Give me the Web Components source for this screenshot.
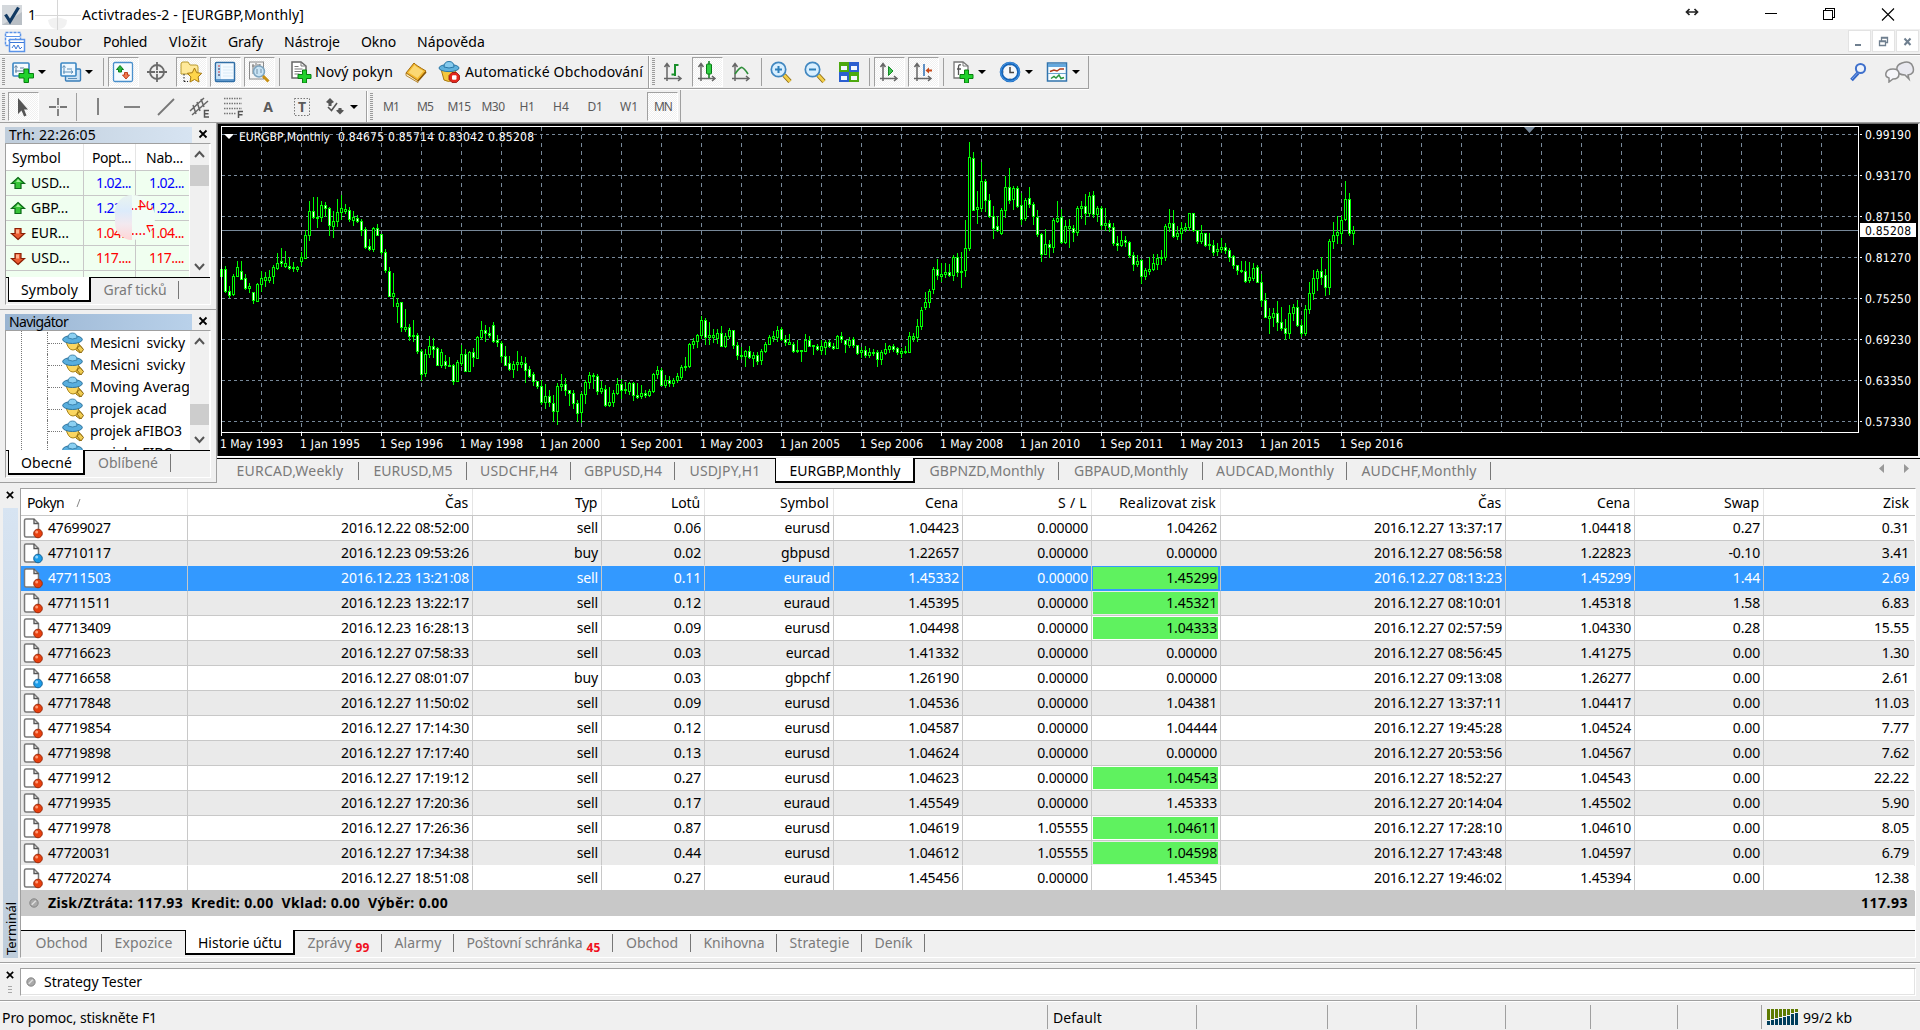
<!DOCTYPE html>
<html lang="cs">
<head>
<meta charset="utf-8">
<title>Activtrades-2 - [EURGBP,Monthly]</title>
<style>
	html, body {
		margin: 0;
		height: 100%;
		overflow: hidden;
		background: #f0f0f0;
	}
	body {
		font: 14px/20px "Noto Sans", "Liberation Sans", sans-serif;
		color: #000;
	}
</style>
</head>
<body>
<trade-app></trade-app>

<script>
// 22x22 icons
const ICONS = {
	check: `<rect x="1" y="1" width="20" height="20" fill="#d4d8dc"/><path d="M1 21 L21 21 L21 8Z" fill="#b9bfc5"/><path d="M4.500 10.500 L9 17.500 L17.500 3.500" fill="none" stroke="#123a63" stroke-width="3.200"/>`,
	app: `<rect x="1.500" y="1.500" width="15" height="13" fill="#fff" stroke="#5b93e8" stroke-width="1.500" stroke-dasharray="3 1"/><path d="M2 5.500h14M4 10l3-2 3 3 2-4" stroke="#5b93e8" fill="none"/><rect x="5.500" y="8.500" width="15" height="12" fill="#fff" stroke="#5b93e8" stroke-width="1.500"/><path d="M6 11.500h14M8 17l2-3 2 4 2-4 2 4 2-2" stroke="#3d78d8" fill="none"/>`,
	newchart: `<rect x="1" y="2" width="16" height="13" rx="1" fill="#f4faff" stroke="#3a86c4" stroke-width="1.600"/><path d="M4 5v7M2.500 6.500L4 4.500 5.500 6.500M3 10h10M11 8.500l2 1.500-2 1.500M8 7h4" stroke="#5d7f9c" fill="none"/><path d="M12 8h4.500v4.500h5v4.500h-5v4.500H12v-4.500H7v-4.500h5z" fill="#21d12c" stroke="#087f10"/>`,
	profiles: `<rect x="5.500" y="8" width="15" height="12" rx="1" fill="#cfe4f5" stroke="#3a7db8" stroke-width="1.400"/><rect x="1" y="2" width="15" height="13" rx="1" fill="#eef7fe" stroke="#3a86c4" stroke-width="1.600"/><path d="M4 5v8M2.500 6.500L4 4.500 5.500 6.500M3 11h10M11 9.500l2 1.500-2 1.500M7 8h5M8 17.500h9" stroke="#5d8fb8" fill="none"/>`,
	market: `<rect x="1.500" y="1.500" width="19" height="19" rx="1.500" fill="#f6fbff" stroke="#4a90cc" stroke-width="1.300"/><path d="M8 4.500l3.500 4h-2v2.500h-3V8.500h-2z" fill="#27b53a" stroke="#0b7e1c"/><path d="M14 18l-3.500-4h2v-2.500h3V14h2z" fill="#f07a50" stroke="#c2401c"/>`,
	target: `<circle cx="11" cy="11" r="7" fill="none" stroke="#6b6b6b" stroke-width="1.800"/><path d="M11 1v8M11 13v8M1 11h8M13 11h8" stroke="#6b6b6b" stroke-width="1.800"/><circle cx="11" cy="11" r="1.200" fill="#6b6b6b"/>`,
	favorites: `<path d="M1 3q0-2 2-2h5l2 3h6q2 0 2 2v7H1z" fill="#ffe99a" stroke="#b99a2e"/><path d="M4 13v8M4 20.500h4" stroke="#222" stroke-dasharray="1.500 1.500"/><path d="M14.500 7l2.200 4.700 5 .6-3.600 3.600.9 5.100-4.500-2.500-4.500 2.500.9-5.100-3.600-3.600 5-.6z" fill="#ffd64a" stroke="#a87a10"/>`,
	navigator: `<rect x="1.500" y="1.500" width="19" height="19" rx="1" fill="#f3faff" stroke="#2f6ea6" stroke-width="1.500"/><rect x="3" y="3" width="4" height="16" fill="#c5e1f6"/><path d="M4 5h2M4 11h2" stroke="#d33"/><path d="M4 8h2M4 14h2" stroke="#225"/><path d="M9 6h10M9 9h10M9 12h10M9 15h10" stroke="#d9ebf7"/><path d="M2 19h18" stroke="#3a7fbe" stroke-width="1.500"/>`,
	tester: `<rect x="1.500" y="1" width="14" height="17" fill="#f5f5f5" stroke="#8a8a8a"/><path d="M5 3v10M8 2v6M12 3v5M4 5h3M9 4h3" stroke="#777"/><circle cx="11" cy="10.500" r="5.500" fill="#c4e2f5" fill-opacity=".9" stroke="#7da4bf" stroke-width="1.500"/><path d="M9 8v5M13 8v4" stroke="#7592a8"/><path d="M15 15l5.500 5.500" stroke="#c99113" stroke-width="3"/>`,
	order: `<path d="M2 1h9l5 4v12H2z" fill="#fff" stroke="#666" stroke-width="1.500"/><path d="M11 1v4h5M4.500 5.500h4M4.500 8h8M4.500 10.500h7M4.500 13h5" stroke="#777" fill="none"/><path d="M12.500 9h4v4.500H21v4h-4.500V22h-4v-4.500H8v-4h4.500z" fill="#21d12c" stroke="#087f10"/>`,
	book: `<path d="M1 12L9 2q1.500 2 12 8l-8 10z" fill="#f2b72d" stroke="#a56c0b"/><path d="M3.500 11.500L9.500 4q2 2 9 6l-6 7z" fill="#fbd873"/><path d="M1 12l12 8v1.500L1 14.500z" fill="#fff3c8" stroke="#a56c0b" stroke-width=".8"/><path d="M13 20l8-9" stroke="#8a5806" stroke-width="1.500"/>`,
	expert: `<path d="M3 8l3 11q5 3 9 0l3-11z" fill="#f5c73c" stroke="#a97a11"/><ellipse cx="11" cy="7" rx="10" ry="3.600" fill="#5fb1dc" stroke="#2876a6"/><path d="M6 6q0-5.500 5-5.500t5 5.500q-5 2-10 0" fill="#86cbee" stroke="#2876a6"/><path d="M14 11.500h4.500l3 3v4l-3 3H14l-3-3v-4z" fill="#e3271c" stroke="#8e0d07" stroke-width=".8"/><rect x="14" y="14.300" width="4.500" height="4.500" rx="1" fill="#fff"/>`,
	bars: `<path d="M5 3v17M2.500 6L5 2.500 7.500 6M2 17.500h17M16 15l3 2.500-3 2.500" fill="none" stroke="#666" stroke-width="1.500"/><path d="M13 3v12M13 4h3.500M9.500 13.500H13" stroke="#198f2a" stroke-width="2"/>`,
	candles: `<path d="M5 3v17M2.500 6L5 2.500 7.500 6M2 17.500h17M16 15l3 2.500-3 2.500" fill="none" stroke="#666" stroke-width="1.500"/><path d="M13 0v17" stroke="#087a17" stroke-width="1.500"/><rect x="10.500" y="3" width="5" height="10" rx="1" fill="#30cf42" stroke="#087a17"/>`,
	line: `<path d="M5 3v17M2.500 6L5 2.500 7.500 6M2 17.500h17M16 15l3 2.500-3 2.500" fill="none" stroke="#666" stroke-width="1.500"/><path d="M5 13q5-7 7-6.500t6 6.500" fill="none" stroke="#308f3b" stroke-width="1.700"/>`,
	zoomin: `<path d="M14 14l6 6.500" stroke="#8c6a10" stroke-width="4.500"/><path d="M14 14l6 6.500" stroke="#f3cf4a" stroke-width="2.800"/><circle cx="8.500" cy="8.500" r="7.200" fill="#d8efff" stroke="#4187c0" stroke-width="1.700"/><path d="M8.500 5v7M5 8.500h7" stroke="#2f7fb9" stroke-width="2"/>`,
	zoomout: `<path d="M14 14l6 6.500" stroke="#8c6a10" stroke-width="4.500"/><path d="M14 14l6 6.500" stroke="#f3cf4a" stroke-width="2.800"/><circle cx="8.500" cy="8.500" r="7.200" fill="#d8efff" stroke="#4187c0" stroke-width="1.700"/><path d="M5 8.500h7" stroke="#2f7fb9" stroke-width="2"/>`,
	tiles: `<rect x="1" y="1" width="10" height="10" fill="#4da80f"/><rect x="11" y="1" width="10" height="10" fill="#2c5fd0"/><rect x="1" y="11" width="10" height="10" fill="#2c5fd0"/><rect x="11" y="11" width="10" height="10" fill="#4da80f"/><g fill="#f2f8ff"><rect x="3" y="5" width="6" height="4"/><rect x="13" y="5" width="6" height="4"/><rect x="3" y="15" width="6" height="4"/><rect x="13" y="15" width="6" height="4"/></g>`,
	autoscroll: `<path d="M5 3v17M2.500 6L5 2.500 7.500 6M2 17.500h17M16 15l3 2.500-3 2.500" fill="none" stroke="#666" stroke-width="1.500"/><path d="M10.500 5.500v9l4.500-4.500z" fill="#43c454" stroke="#148a24"/>`,
	shift: `<path d="M5 3v17M2.500 6L5 2.500 7.500 6M2 17.500h17M16 15l3 2.500-3 2.500" fill="none" stroke="#666" stroke-width="1.500"/><path d="M12 3v12" stroke="#2b6eb4" stroke-width="1.500"/><path d="M13.500 9.500L17 6.500v2h3v2h-3v2z" fill="#c84a1a"/>`,
	indicator: `<path d="M2 1h9l5 4v12H2z" fill="#fff" stroke="#777" stroke-width="1.300"/><path d="M11 1v4h5" fill="none" stroke="#777"/><path d="M9 4q-2.500-1-2.500 2v8M5 8h4" fill="none" stroke="#555" stroke-width="1.300"/><path d="M12.500 9h4v4.500H21v4h-4.500V22h-4v-4.500H8v-4h4.500z" fill="#21d12c" stroke="#087f10"/>`,
	clock: `<circle cx="11" cy="11" r="8.700" fill="#f4f7fa" stroke="#1363b8" stroke-width="3.200"/><circle cx="11" cy="11" r="9.300" fill="none" stroke="#4c9cea"/><path d="M11 6v5.500h4" fill="none" stroke="#444" stroke-width="1.500"/><path d="M11 3.800v1.200M11 17v1.200M3.800 11h1.200" stroke="#888"/>`,
	template: `<rect x="1.500" y="2" width="19" height="18" fill="#f7fcff" stroke="#3274ad" stroke-width="1.500"/><rect x="2" y="3" width="18" height="3" fill="#64a8de"/><path d="M2 12.500h18" stroke="#6ba5cf"/><path d="M4 10.500l4-1.500 3 1 3-2h4" fill="none" stroke="#b13a1a" stroke-width="1.500"/><path d="M5 17.500l3-2 2 1.500 3-3 2 3.500 3-1" fill="none" stroke="#29953a" stroke-width="1.500"/>`,
	cursor: `<path d="M6 2v16l3.500-3.600 2.600 6.200 2.400-1.200-2.400-5.900H16z" fill="#555"/>`,
	cross: `<path d="M11 2v7M11 13v7M2 11h7M13 11h7" stroke="#777" stroke-width="1.800"/><path d="M10 11h2" stroke="#777"/>`,
	vline: `<path d="M11 2v17" stroke="#777" stroke-width="1.800"/>`,
	hline: `<path d="M3 11h16" stroke="#777" stroke-width="1.800"/>`,
	trend: `<path d="M3 19L19 3" stroke="#777" stroke-width="1.800"/>`,
	channel: `<path d="M1 15L15 2M3 19L19 5M4 9l3 9M8 6l3 9M12 3l3 8" stroke="#666" stroke-width="1.500"/><path d="M20 14.500h-4.500v6.500H20M15.500 17.700h4" fill="none" stroke="#555" stroke-width="1.500"/>`,
	fibo: `<path d="M1 2.500h18M1 7.500h18M1 12.500h18M1 17.500h12" stroke="#777" stroke-width="1.300" stroke-dasharray="1.500 1"/><path d="M20 15.500h-4.500v6.500M15.500 18.700h4" fill="none" stroke="#555" stroke-width="1.500"/>`,
	label: `<rect x="3.500" y="2.500" width="15" height="17" fill="none" stroke="#777" stroke-dasharray="1.500 1.500"/>`,
	arrows: `<path d="M1 6l4-4 4 4-2.500 1.500V10h-3V7.500zM11 14.500l2.500-1v-1.500h3v1.500l2.500 1-4 4z" fill="#555"/><path d="M3 11l3.500 3.500L12 7" fill="none" stroke="#555" stroke-width="1.600"/>`,
	search: `<path d="M10 12L3.500 19" stroke="#3467c8" stroke-width="3.600"/><path d="M9.500 12L4 18" stroke="#7fa7ea" stroke-width="1"/><circle cx="12.500" cy="7.500" r="4.600" fill="#eef3fb" stroke="#3f70cc" stroke-width="2"/>`,
	gold: `<path d="M12 13l4-2 5 6-3 4-4-3z" fill="#f3c843" stroke="#8e6b12"/><path d="M4 9q2 9 7 9t6-9z" fill="#fad661" stroke="#a98316"/><ellipse cx="10.500" cy="7.500" rx="9.800" ry="4" fill="#58aede" stroke="#2d749e"/><path d="M6 6q0-5 4.500-5T15 6q-4.500 2-9 0" fill="#8bd0f2" stroke="#2d749e" stroke-width=".8"/><path d="M15 16l3-2.500 3.500 4-2.500 3.500z" fill="#f0cc52" stroke="#8e6b12"/>`,
	up: `<path d="M11 5.500l6.500 6h-3.500v5H8v-5H4.500z" fill="#36c437" stroke="#0b6a17" stroke-width="1.200"/><path d="M11 7l3 3H9z" fill="#a4f09a"/>`,
	down: `<path d="M11 17.500l6.500-6h-3.500v-5H8v5H4.500z" fill="#ea5a30" stroke="#8b2006" stroke-width="1.200"/><path d="M9 7.500h3v4H9z" fill="#ffb08d"/>`,
	sell: `<path d="M3 2h8l4.500 4.500V20H3q-1.500 0-1.500-1.500v-15Q1.500 2 3 2z" fill="#fff" stroke="#7a7a7a" stroke-width="1.500"/><path d="M11 2v4.500h4.500" fill="none" stroke="#555" stroke-width="1.300"/><circle cx="15" cy="16.500" r="4.300" fill="#e8400f" stroke="#9c2b0b"/><circle cx="13.700" cy="15" r="1.500" fill="#ff9a74"/>`,
	buy: `<path d="M3 2h8l4.500 4.500V20H3q-1.500 0-1.500-1.500v-15Q1.500 2 3 2z" fill="#fff" stroke="#7a7a7a" stroke-width="1.500"/><path d="M11 2v4.500h4.500" fill="none" stroke="#555" stroke-width="1.300"/><circle cx="15" cy="16.500" r="4.300" fill="#1b9ce8" stroke="#14649b"/><circle cx="13.700" cy="15" r="1.500" fill="#8fd4ff"/>`,
	dot: `<circle cx="11" cy="11" r="4.600" fill="#a9a9a9" stroke="#7e7e7e"/><path d="M8.500 13l4.500-4.500" stroke="#e0e0e0" stroke-width="1.500"/>`,
	close: `<path d="M7.500 7.500l7 7M14.500 7.500l-7 7" stroke="#000" stroke-width="1.800"/>`,
};

// every element keeps its markup in its own open shadow root
class BaseElement extends HTMLElement {
	constructor () {
		super();
		this._root = this.attachShadow({ mode: 'open' });
	}
	connectedCallback () {
		this._root.innerHTML = this.render();
	}
	attr (name, def) {
		return this.hasAttribute(name) ? this.getAttribute(name) : def;
	}
}

class UiIcon extends BaseElement {
	render () {
		const s = this.attr('size', 22);
		return `
		<style>
			:host { display: block; flex: none; width: ${s}px; height: ${s}px; }
			svg { display: block; }
		</style>
		<svg width="${s}" height="${s}" viewBox="0 0 22 22">${ICONS[this.attr('name')]}</svg>`;
	}
}
customElements.define('ui-icon', UiIcon);

// single line of text tracked to an exact width
const ruler = document.createElement('canvas').getContext('2d');
class UiText extends BaseElement {
	render () {
		const text = this.attr('text', '');
		const size = this.attr('size', 14);
		const weight = this.attr('weight', 400);
		const family = this.attr('family', '"Noto Sans"');
		let spacing = 0;
		if (this.hasAttribute('w')) {
			ruler.font = `${weight} ${size}px ${family}`;
			spacing = (this.attr('w') - ruler.measureText(text).width) / text.length;
		}
		return `
		<style>
			:host { display: block; flex: none; }
			span { display: block; white-space: pre; font: ${weight} ${size}px/20px ${family}, sans-serif; letter-spacing: ${spacing.toFixed(3)}px; }
		</style>
		<span>${text}</span>`;
	}
}
customElements.define('ui-text', UiText);

class TitleBar extends BaseElement {
	render () {
		return `
		<style>
			:host { display: flex; position: relative; height: 29px; background: #fff; box-sizing: border-box; padding-left: 1px; align-items: center; }
			.num { width: 54px; padding-left: 5px; }
			.caption { flex: 1; }
			.mark { position: absolute; left: 34px; top: 0; }
			.buttons { display: block; }
		</style>
		<ui-icon name="check"></ui-icon>
		<ui-text class="num" text="1"></ui-text>
		<ui-text class="caption" text="Activtrades-2 - [EURGBP,Monthly]" w="222"></ui-text>
		<svg class="mark" width="48" height="30"><path d="M14 20q9-5 19 0 0 9-9 9t-10-9" fill="#f1f1f1"/><path d="M1 15.500h46M23.500 0v30" stroke="#d6d6d6"/></svg>
		<svg class="buttons" width="240" height="29">
			<path d="M7 12h10M9.500 9l-3 3 3 3M14.500 9l3 3-3 3" fill="none" stroke="#222" stroke-width="1.700"/>
			<g shape-rendering="crispEdges" fill="none" stroke="#000">
				<path d="M85 13.500h12"/>
				<path d="M145.500 10.500v-2h9v9h-2"/>
				<rect x="143.500" y="10.500" width="9" height="9"/>
			</g>
			<path d="M202 8.500l12 12M214 8.500l-12 12" stroke="#000" stroke-width="1.100"/>
		</svg>`;
	}
}
customElements.define('title-bar', TitleBar);

class MenuBar extends BaseElement {
	render () {
		const items = [['Soubor', 48, 69], ['Pohled', 44, 66], ['Vložit', 38, 59], ['Grafy', 35, 56], ['Nástroje', 56, 77], ['Okno', 35, 56], ['Nápověda', 68, 68]];
		return `
		<style>
			:host { display: flex; height: 27px; box-sizing: border-box; border-bottom: 1px solid #fff; box-shadow: inset 0 -1px #a0a0a0; padding-left: 4px; }
			ui-icon { margin: 2px 8px 0 0; }
			ui-text { padding-top: 3px; }
			.mdi { margin-left: auto; display: flex; gap: 1px; padding: 1px 1px 0 0; }
			.mdi svg { background: #fff; border: 1px solid #e3e3e3; }
		</style>
		<ui-icon name="app"></ui-icon>
		${items.map(([t, w, box]) => `<ui-text text="${t}" w="${w}" style="width:${box}px"></ui-text>`).join('')}
		<div class="mdi">
			<svg width="21" height="20" viewBox="0 0 21 20"><path d="M6 14h6" stroke="#6f7f8f" stroke-width="2"/></svg>
			<svg width="21" height="20" viewBox="0 0 21 20"><path d="M8.500 10V6.500h6v5h-2M8 7h7M6.500 10h6v4.500h-6zM6 10.500h7" fill="none" stroke="#6f7f8f" stroke-width="1.300"/></svg>
			<svg width="21" height="20" viewBox="0 0 21 20"><path d="M7.500 7.500l6 6.500M13.500 7.500l-6 6.500" stroke="#6f7f8f" stroke-width="2"/></svg>
		</div>`;
	}
}
customElements.define('menu-bar', MenuBar);

class ToolButton extends BaseElement {
	render () {
		const pressed = this.hasAttribute('pressed');
		const icon = this.attr('icon');
		const label = this.attr('label');
		const drop = this.hasAttribute('drop');
		return `
		<style>
			:host { display: flex; flex: none; box-sizing: border-box; width: ${this.attr('w', 34)}px; padding: 1px 2px 1px 1px; }
			.face { display: flex; flex: 1; align-items: center; box-sizing: border-box; border: 1px solid transparent; padding-left: ${this.attr('pad', 3)}px; }
			.pressed { border-color: #a0a0a0 #fff #fff #a0a0a0; background: repeating-conic-gradient(#fff 0 25%, #f0f0f0 0 50%) 0 0 / 2px 2px; }
			.drop { margin-left: auto; margin-right: ${this.attr('dropgap', 5)}px; border: 4px solid transparent; border-top: 4px solid #000; border-bottom: 0; }
			.label { padding-left: ${this.attr('gap', 3)}px; }
			.glyph { flex: 1; text-align: center; color: #5a5a5a; margin-left: -2px; }
		</style>
		<div class="face ${pressed ? 'pressed' : ''}">
			${icon ? `<ui-icon name="${icon}"></ui-icon>` : ''}
			${label ? `<ui-text class="label" text="${label}" w="${this.attr('labelw')}"></ui-text>` : ''}
			${this.hasAttribute('glyph') ? `<div class="glyph"><slot></slot></div>` : ''}
			${drop ? '<i class="drop"></i>' : ''}
		</div>`;
	}
}
customElements.define('tool-button', ToolButton);

class ToolGrip extends BaseElement {
	render () {
		return `
		<style>
			:host { display: block; flex: none; width: ${this.attr('w', 7)}px; padding-left: 2px; box-sizing: border-box; }
			i { display: block; width: 3px; height: 28px; margin-top: 2px; background: repeating-linear-gradient(#9a9a9a 0 1px, #f0f0f0 1px 2px); }
		</style><i></i>`;
	}
}
customElements.define('tool-grip', ToolGrip);

class ToolSep extends BaseElement {
	render () {
		return `
		<style>
			:host { display: block; flex: none; width: ${this.attr('w', 6)}px; padding: 2px 0 2px ${this.attr('pad', 2)}px; box-sizing: border-box; }
			i { display: block; width: 1px; height: 28px; background: #a0a0a0; }
		</style><i></i>`;
	}
}
customElements.define('tool-sep', ToolSep);

class ToolBars extends BaseElement {
	render () {
		const frames = ['M1', 'M5', 'M15', 'M30', 'H1', 'H4', 'D1', 'W1', 'MN'];
		const widths = [16, 16, 23, 23, 15, 16, 15, 18, 18];
		return `
		<style>
			:host { display: block; height: 66px; position: relative; }
			.row { display: flex; height: 32px; width: max-content; border-bottom: 1px solid #a0a0a0; border-right: 1px solid #a0a0a0; box-shadow: 0 1px #fff; }
			.row + .row { margin-top: 1px; height: 31px; padding-top: 1px; border-bottom: 0; box-shadow: none; }
			.group { display: flex; border-right: 1px solid #a0a0a0; box-shadow: 1px 0 #fff; margin-right: 1px; }
			.last { border: 0; margin: 0; box-shadow: none; }
			b { font: 700 14px/20px "Noto Sans", sans-serif; }
			.text { display: grid; }
			.text > * { grid-area: 1 / 1; place-self: center; }
			.frame { display: flex; justify-content: center; }
			.right { position: absolute; right: 4px; top: 5px; display: flex; gap: 14px; }
		</style>
		<div class="row">
			<div class="group">
				<tool-grip w="8"></tool-grip>
				<tool-button icon="newchart" w="47" pad="2" dropgap="6" drop></tool-button>
				<tool-button icon="profiles" w="48" pad="3" dropgap="7" drop></tool-button>
				<tool-sep w="4" pad="0"></tool-sep>
				<tool-button icon="market" pressed></tool-button>
				<tool-button icon="target"></tool-button>
				<tool-button icon="favorites" pressed></tool-button>
				<tool-button icon="navigator" pressed></tool-button>
				<tool-button icon="tester" pressed></tool-button>
				<tool-sep></tool-sep>
				<tool-button icon="order" w="117" pad="5" label="Nový pokyn" labelw="78"></tool-button>
				<tool-button icon="book" w="33" pad="3"></tool-button>
				<tool-button icon="expert" w="215" pad="3" gap="5" label="Automatické Obchodování" labelw="178"></tool-button>
			</div>
			<div class="group last">
				<tool-grip></tool-grip>
				<tool-button icon="bars"></tool-button>
				<tool-button icon="candles" pressed></tool-button>
				<tool-button icon="line"></tool-button>
				<tool-sep></tool-sep>
				<tool-button icon="zoomin"></tool-button>
				<tool-button icon="zoomout"></tool-button>
				<tool-button icon="tiles"></tool-button>
				<tool-sep></tool-sep>
				<tool-button icon="autoscroll" pressed></tool-button>
				<tool-button icon="shift" pressed></tool-button>
				<tool-sep></tool-sep>
				<tool-button icon="indicator" w="47" drop></tool-button>
				<tool-button icon="clock" w="47" pad="3" drop></tool-button>
				<tool-button icon="template" w="47" pad="3" drop dropgap="5"></tool-button>
			</div>
		</div>
		<div class="row">
			<div class="group">
				<tool-grip></tool-grip>
				<tool-button icon="cursor" pressed></tool-button>
				<tool-button icon="cross" pad="4"></tool-button>
				<tool-sep pad="1"></tool-sep>
				<tool-button icon="vline" pad="4"></tool-button>
				<tool-button icon="hline" pad="4"></tool-button>
				<tool-button icon="trend" pad="4"></tool-button>
				<tool-button icon="channel" pad="4"></tool-button>
				<tool-button icon="fibo" pad="4"></tool-button>
				<tool-button glyph><b>A</b></tool-button>
				<tool-button glyph><div class="text"><ui-icon name="label"></ui-icon><b>T</b></div></tool-button>
				<tool-button icon="arrows" w="47" pad="4" drop></tool-button>
			</div>
			<div class="group last">
				<tool-grip w="6"></tool-grip>
				${frames.map((f, i) => `<tool-button glyph ${f === 'MN' ? 'pressed' : ''}><div class="frame"><ui-text text="${f}" size="12" w="${widths[i]}"></ui-text></div></tool-button>`).join('')}
			</div>
		</div>
		<div class="right">
			<ui-icon name="search"></ui-icon>
			<svg width="32" height="22" viewBox="0 0 32 22"><path d="M18 2q9-3 11 4t-5 8l1 4-4-4q-7 0-8-5t5-7z" fill="#e9e9f0" stroke="#8b8b8b" stroke-width="1.500"/><path d="M9 8q6 0 6 5t-6 5l-4 3v-4q-4-1-3-5t7-4z" fill="#f6f6fa" stroke="#8b8b8b" stroke-width="1.500"/></svg>
		</div>`;
	}
}
customElements.define('tool-bars', ToolBars);

// tab strip: tabs="label|box width|text width|badge;..." , active index
class TabStrip extends BaseElement {
	render () {
		const tabs = this.attr('tabs').split(';').map(t => t.split('|'));
		const active = +this.attr('active');
		return `
		<style>
			:host { display: flex; height: ${this.attr('h', 25)}px; border-top: 1px solid #000; box-sizing: border-box; padding-left: ${this.attr('lead', 0)}px; color: #7a7a7a; }
			.tab { display: flex; flex: none; justify-content: center; box-sizing: border-box; height: 18px; margin-top: 3px; border-right: 1px solid #777; }
			.tab ui-text { margin: -1px 0 0 1px; }
			.before { border-right-color: transparent; }
			.active { height: 25px; margin-top: -1px; background: #fff; color: #000; border: 1px solid #000; border-top: 0; border-right-width: 2px; border-bottom-width: 2px; }
			.tab.active ui-text { margin-top: 3px; }
			.tab ui-text.badge { color: #f01020; margin: 4px 0 0 4px; }
		</style>
		${tabs.map(([label, box, w, badge], i) => `
			<div class="tab ${i === active ? 'active' : ''} ${i === active - 1 ? 'before' : ''}" style="width:${box}px">
				<ui-text text="${label}" w="${w}"></ui-text>
				${badge ? `<ui-text class="badge" text="${badge}" size="12" weight="700" w="14"></ui-text>` : ''}
			</div>`).join('')}
		<slot></slot>`;
	}
}
customElements.define('tab-strip', TabStrip);

class ScrollBar extends BaseElement {
	render () {
		return `
		<style>
			:host { display: flex; flex: none; flex-direction: column; width: 19px; margin-left: 1px; background: #f0f0f0; }
			svg { display: block; flex: none; }
			.top { height: ${this.attr('top')}px; }
			.thumb { height: 21px; background: #cdcdcd; }
			.fill { flex: 1; }
		</style>
		<svg width="19" height="20"><path d="M5 13l4.500-5 4.500 5" fill="none" stroke="#555" stroke-width="2"/></svg>
		<div class="top"></div>
		<div class="thumb"></div>
		<div class="fill"></div>
		<svg width="19" height="20"><path d="M5 7l4.500 5 4.500-5" fill="none" stroke="#555" stroke-width="2"/></svg>`;
	}
}
customElements.define('scroll-bar', ScrollBar);

// docked panel with caption, body slot and tab slot
class DockPanel extends BaseElement {
	render () {
		return `
		<style>
			:host { display: block; box-sizing: border-box; height: ${this.attr('h')}px; padding: 3px 5px 0 5px; border-bottom: 1px solid #a0a0a0; }
			.caption { display: flex; align-items: center; height: 17px; }
			.name { width: 183px; height: 16px; padding-left: 4px; background: linear-gradient(90deg, ${this.attr('from')}, ${this.attr('to')}); }
			.name ui-text { margin-top: -2px; }
			ui-icon { margin: -1px -4px 0 0; }
			.inset { display: flex; flex-direction: column; height: ${this.attr('inner')}px; border: 1px solid #a0a0a0; border-color: #a0a0a0 #fff #fff #a0a0a0; }
			.body { display: flex; height: ${this.attr('body')}px; background: #fff; }
			.view { width: 183px; overflow: hidden; }
			slot[name=tabs] { display: block; }
		</style>
		<div class="caption">
			<div class="name"><ui-text text="${this.attr('name')}" w="${this.attr('w')}"></ui-text></div>
			<ui-icon name="close" size="22"></ui-icon>
		</div>
		<div class="inset">
			<div class="body"><div class="view"><slot></slot></div><scroll-bar top="${this.attr('top')}"></scroll-bar></div>
			<slot name="tabs"></slot>
		</div>`;
	}
}
customElements.define('dock-panel', DockPanel);

class MarketWatch extends BaseElement {
	render () {
		const rows = [['up', 'USD...', '1.02...', '1.02...', '#00f'], ['up', 'GBP...', '1.22...', '1.22...', '#00f'], ['down', 'EUR...', '1.04...', '1.04...', '#f00'], ['down', 'USD...', '117....', '117....', '#f00'], ['', '', '', '', '#000']];
		return `
		<style>
			:host { display: block; position: relative; height: 133px; overflow: hidden; }
			.head, .row { display: grid; grid-template-columns: 78px 52px 53px; }
			.head { height: 26px; border-bottom: 1px solid #c8c8c8; }
			.head > div { display: flex; align-items: center; padding: 1px 0 0 6px; border-right: 1px solid #e5e5e5; }
			.head > div + div { padding-left: 8px; }
			.head > div:last-child { padding-left: 10px; }
			.row { height: 24px; border-bottom: 1px solid #c8c8c8; background: #f0fff0; }
			.cell { display: flex; align-items: center; border-right: 1px solid #c8c8c8; }
			.num { justify-content: flex-end; padding-right: 4px; }
			.cell:last-child, .head > div:last-child { border-right: 0; }
			.cell:last-child { padding-right: 5px; }
			ui-icon { margin: 0 2px 0 1px; }
			.smudge { position: absolute; left: 109px; top: 51px; width: 44px; height: 45px; overflow: hidden; }
			.fade { width: 17px; height: 45px; border-radius: 18px 0 0 18px; background: linear-gradient(#e9f3f0, #dcebfb 35%, #f3e9ef 65%, #ffd5d5); }
			.patch { position: absolute; left: 17px; top: 0; width: 23px; height: 45px; background: #f1fdf5; border-radius: 0 22px 22px 0; color: #f00; overflow: hidden; }
			.flip { display: block; width: 22px; overflow: hidden; transform: scaleX(-1); }
			.flip + .flip { margin-top: 5px; }
		</style>
		<div class="head"><div><ui-text text="Symbol" w="49"></ui-text></div><div><ui-text text="Popt..." w="39"></ui-text></div><div><ui-text text="Nab..." w="37"></ui-text></div></div>
		${rows.map(([icon, s, a, b, c]) => `
			<div class="row">
				<div class="cell">${icon ? `<ui-icon name="${icon}"></ui-icon>` : ''}<ui-text text="${s}"></ui-text></div>
				<div class="cell num" style="color:${c}"><ui-text text="${a}" ${a ? 'w="35"' : ''}></ui-text></div>
				<div class="cell num" style="color:${c}"><ui-text text="${b}" ${b ? 'w="35"' : ''}></ui-text></div>
			</div>`).join('')}
		<div class="smudge">
			<div class="fade"></div>
			<div class="patch"><span class="flip">04...</span><span class="flip">7....</span></div>
		</div>`;
	}
}
customElements.define('market-watch', MarketWatch);

class NavTree extends BaseElement {
	render () {
		const items = [['Mesicni  svicky', 95], ['Mesicni  svicky', 95], ['Moving Average', 108], ['projek acad', 77], ['projek aFIBO3', 92], ['projek aFIBO', 84]];
		return `
		<style>
			:host { display: flex; height: 119px; overflow: hidden; padding-left: 15px; }
			.rail { width: 0; border-left: 1px dotted #777; }
			.items { margin: 1px 0 0 25px; }
			.item { display: flex; align-items: center; height: 22px; border-left: 1px dotted #777; }
			.link { width: 14px; border-top: 1px dotted #777; }
			ui-text { padding-left: 6px; }
		</style>
		<div class="rail"></div>
		<div class="items">${items.map(([t, w]) => `<div class="item"><i class="link"></i><ui-icon name="gold"></ui-icon><ui-text text="${t}" w="${w}"></ui-text></div>`).join('')}</div>`;
	}
}
customElements.define('nav-tree', NavTree);

// monthly candles from May 1993: open/close edges, then high and low, in thirds of a pixel; d = falling
const CANDLES = `447 470 445 490|447 515 440 518 d|515 526 498 533 d|468 524 462 526|443 468 425 470|455 477 423 478 d|475 505 462 507 d|498 506 489 517|517 542 517 551 d|492 545 489 545
475 493 455 515|473 482 458 500|472 480 452 486|442 470 436 490|430 444 400 447|424 431 384 440 d|430 438 393 443|438 445 412 448 d|443 446 427 453|441 447 438 455
412 423 397 437|346 416 330 416|274 346 243 362|273 293 233 296 d|291 296 231 323|256 293 243 304|255 266 247 290 d|265 317 262 345 d|304 318 273 353|277 304 237 320
265 278 226 299|267 274 252 280|270 299 262 303 d|293 300 275 315|296 305 285 308 d|304 330 297 346 d|327 383 323 386 d|379 389 357 391 d|326 389 321 395|325 345 312 347 d
343 398 343 403 d|397 452 388 458 d|454 530 443 530 d|520 530 459 560|550 559 535 608|547 622 547 633 d|621 627 567 635|622 650 613 660 d|645 650 600 663|646 695 640 701 d
695 762 688 781 d|703 760 688 770|679 704 648 711|680 688 654 711 d|685 735 683 735 d|697 735 687 742|724 737 706 745 d|736 740 711 740|736 785 732 792 d|728 785 722 785
703 730 675 735|703 753 687 755 d|697 753 693 755|697 713 685 738 d|653 716 648 716|631 653 603 659|631 640 615 664 d|640 647 622 651 d|615 663 606 666 d|661 667 646 680 d
670 710 663 726 d|708 735 679 737 d|731 747 709 750 d|733 747 724 771|726 734 693 752|728 732 709 742|730 752 711 786 d|748 768 738 772 d|763 785 757 795 d|785 798 785 804 d
799 847 782 852 d|829 848 793 866|830 847 810 858 d|849 875 825 903 d|799 875 790 914|792 800 762 812|793 811 775 826 d|811 820 811 857 d|820 851 811 865 d|850 880 841 905 d
823 878 817 908|787 823 782 851|766 786 756 804|766 770 760 804|769 815 763 823 d|806 813 784 819|809 857 797 860 d|847 857 801 860|820 848 811 860|793 820 774 823
793 810 778 836 d|809 812 787 820|790 813 787 822|790 825 787 842 d|826 832 790 834 d|821 830 797 835|820 827 810 833 d|815 826 808 830|763 815 759 818|750 763 739 776
750 797 745 797 d|780 797 765 802|782 790 768 798 d|781 790 775 800|769 782 759 788|742 773 736 778|739 742 712 752|673 738 669 743|664 674 656 685|647 664 642 682
601 647 588 655|600 652 594 672 d|646 653 608 674|646 652 629 666|640 654 627 670|640 680 618 680 d|649 679 639 682|631 649 624 656|631 676 631 685 d|676 707 668 717 d
706 709 682 715|694 709 690 738|694 712 679 715 d|706 714 697 738|706 724 696 732 d|694 722 688 732|673 695 667 698|652 673 645 673|649 654 633 665|631 651 620 663
628 658 623 662 d|658 668 646 677 d|666 672 642 672|673 694 667 698 d|690 695 660 697|690 695 690 725|660 693 642 693|660 678 650 678 d|676 680 676 704|679 688 672 692 d
680 690 660 702|667 681 660 702|667 679 660 683 d|679 686 669 688 d|649 686 645 686|649 658 636 666 d|660 674 660 697 d|660 675 651 683|659 676 653 681 d|676 699 676 702 d
691 697 683 711|690 707 679 712 d|697 707 685 711|696 700 687 707|698 719 692 740 d|697 718 691 732|687 699 671 702|679 688 675 696|678 688 672 694 d|685 697 681 702 d
695 699 684 711|694 698 678 701|649 696 638 698|650 654 639 664|619 653 598 663|571 618 561 627|546 563 517 567|514 547 507 561|448 509 442 521|448 466 417 478 d
464 469 430 485|457 464 430 473|457 467 432 470 d|412 467 407 480|411 457 400 469 d|454 458 396 501|384 452 300 470|112 386 66 390|115 271 96 271 d|263 267 213 309
184 266 128 273|184 241 177 275 d|241 290 222 292 d|290 325 258 356 d|320 330 290 333 d|271 340 265 343|202 271 168 293|202 241 144 251 d|205 238 198 267|205 260 200 263 d
256 298 220 314 d|241 295 236 302|235 253 201 261 d|253 290 248 314 d|292 343 272 350 d|343 402 340 425 d|373 402 327 404|373 383 362 411 d|301 381 295 398|295 303 243 307
293 367 267 370 d|319 367 300 370|318 326 297 381|325 337 315 364 d|265 337 260 345|259 265 243 294|259 280 222 312 d|228 280 216 290|226 284 213 293 d|266 283 258 305
265 317 258 328 d|311 317 265 332|310 322 300 334 d|322 371 311 377 d|370 377 350 391 d|361 376 333 380|362 368 349 380 d|368 406 364 412 d|405 434 396 450 d|424 434 405 440
421 470 417 491 d|451 470 445 477|449 454 411 463|431 448 402 452|415 432 403 448|412 416 391 434|318 413 312 422|310 322 267 335|310 349 272 352 d|341 350 320 357
325 341 307 357|322 329 311 334|280 323 280 332|280 331 280 335 d|331 365 331 369 d|340 364 315 370|340 376 340 379 d|373 377 340 387|377 398 361 405 d|388 395 371 407
382 388 354 397|382 391 371 399 d|391 411 384 423 d|409 436 405 446 d|436 451 436 464 d|451 455 424 458|454 483 423 486 d|472 482 426 486|444 474 429 480|443 487 435 487 d
487 541 462 559 d|541 592 519 592 d|590 595 565 641|580 593 565 620|580 608 543 632 d|606 626 562 632 d|625 641 597 657 d|580 641 556 654|562 580 553 602|562 617 540 620 d
615 641 600 650 d|568 641 555 645|520 567 487 581|475 520 450 537|454 475 447 511|454 472 412 494 d|466 502 447 527 d|364 502 357 522|346 364 306 386|337 347 289 369
301 339 289 369|238 298 183 300|238 341 219 345 d|331 341 318 374`.split(/[|\n]/).map(c => c.split(' '));

class PriceChart extends BaseElement {
	render () {
		const px = v => Math.round(v / 3 - 4.3);
		let rows = '', cols = '', labels = '', wicks = '', up = '', down = '';
		const prices = ['0.99190', '0.93170', '0.87150', '0.81270', '0.75250', '0.69230', '0.63350', '0.57330'];
		prices.forEach((p, i) => {
			const y = 10 + 41 * i;
			rows += `M4 ${y}.5H1641`;
			labels += `<path d="M1642 ${y}.5h2" stroke="#fff"/><text x="1647" y="${y + 5}" textLength="46">${p}</text>`;
		});
		for (let x = 43; x < 1640; x += 40) cols += `M${x}.5 3V308`;
		const months = ['May', 'Jan', 'Sep'];
		for (let i = 0; i < 15; i++) {
			const year = 1993 + Math.floor((4 + 20 * i) / 12);
			labels += `<path d="M${3 + 80 * i}.5 309v3" stroke="#fff"/><text x="${2 + 80 * i}" y="324" textLength="${months[i % 3] === 'Jan' ? 60 : 63}">1 ${months[i % 3]} ${year}</text>`;
		}
		CANDLES.forEach(([top, bottom, high, low, d], i) => {
			const x = 3 + 4 * i;
			const t = px(top), b = Math.max(px(bottom), t + 1);
			wicks += `M${x}.5 ${px(high)}V${px(low) + 1}`;
			const body = `M${x - .5} ${t}.5h2V${b}.5h-2z`;
			if (d) down += body; else up += body;
		});
		return `
		<style>
			:host { display: block; height: 333px; margin-bottom: 2px; box-sizing: border-box; border-top: 1px solid #6e6e6e; border-left: 1px solid #6e6e6e; border-right: 2px solid #f0f0f0; background: #000; box-shadow: 0 1px #fff; }
			svg { display: block; font: 12px "DejaVu Sans Condensed", "DejaVu Sans", sans-serif; font-stretch: condensed; }
			text { fill: #fff; text-rendering: geometricPrecision; }
		</style>
		<svg width="1700" height="332" viewBox="0 0 1700 332">
			<g shape-rendering="crispEdges" fill="none">
				<path d="${rows}" stroke="#778899" stroke-dasharray="3 3"/>
				<path d="${cols}" stroke="#778899" stroke-dasharray="4 4"/>
				<path d="M4 106.500H1641" stroke="#778899"/>
				<path d="${wicks}" stroke="#0f0"/>
				<path d="${up}" stroke="#0f0" fill="#000"/>
				<path d="${down}" stroke="#0f0" fill="#fff"/>
				<rect x="3.500" y="2.500" width="1637" height="306" stroke="#fff"/>
			</g>
			<path d="M1306 3h11l-5.500 6z" fill="#778899"/>
			<path d="M6 10h10l-5 5z" fill="#fff"/>
			<text x="21" y="17" textLength="91">EURGBP,Monthly</text>
			<text x="120" y="17" textLength="196">0.84675 0.85714 0.83042 0.85208</text>
			${labels}
			<rect x="1642" y="99" width="56" height="14" fill="#fff"/>
			<text x="1647" y="111" textLength="46" style="fill:#000">0.85208</text>
		</svg>`;
	}
}
customElements.define('price-chart', PriceChart);

const ORDERS = `47699027|2016.12.22 08:52:00|sell|0.06|eurusd|1.04423|0.00000|1.04262|2016.12.27 13:37:17|1.04418|0.27|0.31
47710117|2016.12.23 09:53:26|buy|0.02|gbpusd|1.22657|0.00000|0.00000|2016.12.27 08:56:58|1.22823|-0.10|3.41
47711503|2016.12.23 13:21:08|sell|0.11|euraud|1.45332|0.00000|1.45299|2016.12.27 08:13:23|1.45299|1.44|2.69
47711511|2016.12.23 13:22:17|sell|0.12|euraud|1.45395|0.00000|1.45321|2016.12.27 08:10:01|1.45318|1.58|6.83
47713409|2016.12.23 16:28:13|sell|0.09|eurusd|1.04498|0.00000|1.04333|2016.12.27 02:57:59|1.04330|0.28|15.55
47716623|2016.12.27 07:58:33|sell|0.03|eurcad|1.41332|0.00000|0.00000|2016.12.27 08:56:45|1.41275|0.00|1.30
47716658|2016.12.27 08:01:07|buy|0.03|gbpchf|1.26190|0.00000|0.00000|2016.12.27 09:13:08|1.26277|0.00|2.61
47717848|2016.12.27 11:50:02|sell|0.09|eurusd|1.04536|0.00000|1.04381|2016.12.27 13:37:11|1.04417|0.00|11.03
47719854|2016.12.27 17:14:30|sell|0.12|eurusd|1.04587|0.00000|1.04444|2016.12.27 19:45:28|1.04524|0.00|7.77
47719898|2016.12.27 17:17:40|sell|0.13|eurusd|1.04624|0.00000|0.00000|2016.12.27 20:53:56|1.04567|0.00|7.62
47719912|2016.12.27 17:19:12|sell|0.27|eurusd|1.04623|0.00000|1.04543|2016.12.27 18:52:27|1.04543|0.00|22.22
47719935|2016.12.27 17:20:36|sell|0.17|euraud|1.45549|0.00000|1.45333|2016.12.27 20:14:04|1.45502|0.00|5.90
47719978|2016.12.27 17:26:36|sell|0.87|eurusd|1.04619|1.05555|1.04611|2016.12.27 17:28:10|1.04610|0.00|8.05
47720031|2016.12.27 17:34:38|sell|0.44|eurusd|1.04612|1.05555|1.04598|2016.12.27 17:43:48|1.04597|0.00|6.79
47720274|2016.12.27 18:51:08|sell|0.27|euraud|1.45456|0.00000|1.45345|2016.12.27 19:46:02|1.45394|0.00|12.38`.split('\n').map(r => r.split('|'));

class OrderTable extends BaseElement {
	render () {
		const heads = [['Čas', 23], ['Typ', 22], ['Lotů', 29], ['Symbol', 49], ['Cena', 33], ['S / L', 29], ['Realizovat zisk', 97], ['Čas', 23], ['Cena', 33], ['Swap', 35], ['Zisk', 26]];
		const hit = [2, 3, 4, 10, 12, 13];
		return `
		<style>
			:host { display: block; height: 441px; background: #fff; }
			.head, .row { display: grid; grid-template-columns: 167px 285px 129px 103px 129px 129px 129px 129px 285px 129px 129px 150px; }
			.head { height: 27px; box-sizing: border-box; border-bottom: 1px solid #c8c8c8; line-height: 26px; }
			.head > div { display: flex; justify-content: flex-end; align-items: center; padding: 2px 4px 0 0; border-right: 1px solid #e5e5e5; }
			.head > .first { justify-content: flex-start; padding-left: 6px; }
			.row { height: 25px; letter-spacing: -.15px; line-height: 24px; }
			.row > div { box-sizing: border-box; border-right: 1px solid #c8c8c8; border-bottom: 1px solid #c8c8c8; text-align: right; padding-right: 3px; }
			.row > div:last-child, .head > div:last-child { border-right: 0; padding-right: 5px; }
			.row > .id { display: flex; align-items: center; text-align: left; padding-left: 2px; }
			.id ui-icon { margin-right: 3px; }
			.alt { background: #eaeaea; }
			.sel { background: #3399ff; color: #fff; }
			.sel > div { border-bottom-color: #3399ff; }
			.row:has(+ .sel) > div { border-bottom-color: #eaeaea; }
			.row > .hit { color: #000; background: #5ff25f content-box; padding: 1px 2px 1px 1px; line-height: 22px; }
			.hit span { margin-right: 1px; }
			.sum { display: flex; align-items: center; height: 25px; box-sizing: border-box; background: #c8c8c8; padding: 0 7px 2px 3px; }
			.sum .total { margin-left: auto; }
			.sum ui-icon { margin: 1px 4px 0 0; }
			.row:nth-child(16) > div { border-bottom-color: #fff; }
		</style>
		<div class="head">
			<div class="first"><ui-text text="Pokyn" w="37"></ui-text><svg width="20" height="12"><path d="M13 10L16 2" stroke="#888"/></svg></div>
			${heads.map(([t, w]) => `<div><ui-text text="${t}" w="${w}"></ui-text></div>`).join('')}
		</div>
		${ORDERS.map((o, i) => `
			<div class="row ${i === 2 ? 'sel' : i % 2 ? 'alt' : ''}">
				<div class="id"><ui-icon name="${o[2]}"></ui-icon>${o[0]}</div>
				${o.slice(1).map((v, c) => `<div class="${c === 6 && hit.includes(i) ? 'hit' : ''}"><span>${v}</span></div>`).join('')}
			</div>`).join('')}
		<div class="sum">
			<ui-icon name="dot" size="20"></ui-icon>
			<ui-text text="Zisk/Ztráta: 117.93  Kredit: 0.00  Vklad: 0.00  Výběr: 0.00" weight="700" w="400"></ui-text>
			<ui-text class="total" text="117.93" weight="700" w="47"></ui-text>
		</div>`;
	}
}
customElements.define('order-table', OrderTable);

class TerminalPanel extends BaseElement {
	render () {
		return `
		<style>
			:host { display: flex; height: 480px; box-sizing: border-box; padding: 5px 4px 4px 0; border-bottom: 1px solid #a0a0a0; }
			.side { width: 20px; display: flex; flex-direction: column; align-items: center; }
			.side ui-icon { margin: -3px 0 3px; }
			.strip { display: flex; justify-content: flex-start; align-items: center; width: 15px; flex: 1; background: linear-gradient(#bfcddb, #d7e4f2); writing-mode: vertical-rl; transform: rotate(180deg); }
			.strip ui-text { margin-top: 3px; }
			.main { flex: 1; border: 1px solid #a0a0a0; border-color: #a0a0a0 #fff #fff #a0a0a0; }
		</style>
		<div class="side"><ui-icon name="close" size="20"></ui-icon><div class="strip"><ui-text text="Terminál" size="13" w="53"></ui-text></div></div>
		<div class="main">
			<order-table></order-table>
			<tab-strip h="27" active="2" tabs="Obchod|81|52;Expozice|83|58;Historie účtu|110|84;Zprávy|87|44|99;Alarmy|72|47;Poštovní schránka|159|116|45;Obchod|78|52;Knihovna|86|61;Strategie|85|60;Deník|63|38"></tab-strip>
		</div>`;
	}
}
customElements.define('terminal-panel', TerminalPanel);

class TesterPanel extends BaseElement {
	render () {
		return `
		<style>
			:host { display: flex; height: 38px; box-sizing: border-box; border-top: 1px solid #fff; border-bottom: 1px solid #a0a0a0; padding: 4px 4px 4px 0; }
			.side { width: 20px; display: flex; flex-direction: column; align-items: center; }
			.side ui-icon { margin-top: -3px; }
			.side i { width: 4px; height: 8px; background: repeating-linear-gradient(#a8a8a8 0 1px, #f0f0f0 1px 3px); margin-top: 1px; }
			.box { display: flex; align-items: center; flex: 1; background: #fff; border: 1px solid #a0a0a0; border-color: #a0a0a0 #fff #fff #a0a0a0; box-shadow: inset -1px -1px #e3e3e3; }
			ui-icon + ui-text { padding-left: 3px; }
		</style>
		<div class="side"><ui-icon name="close" size="20"></ui-icon><i></i></div>
		<div class="box"><ui-icon name="dot" size="20"></ui-icon><ui-text text="Strategy Tester" w="98"></ui-text></div>`;
	}
}
customElements.define('tester-panel', TesterPanel);

class StatusBar extends BaseElement {
	render () {
		let bars = '';
		for (let i = 0; i < 8; i++) {
			const cut = 11 - i * 1.1;
			bars += `<rect x="${i * 4}" y="0" width="3" height="${cut}" fill="#5d7a00"/><rect x="${i * 4}" y="${cut + 1}" width="3" height="${15 - cut}" fill="#003e5c"/>`;
		}
		return `
		<style>
			:host { display: flex; flex: 1; border-top: 1px solid #fff; padding-top: 3px; }
			div { display: flex; align-items: center; box-sizing: border-box; height: 24px; border-right: 1px solid #a0a0a0; }
			ui-text { padding-top: 1px; }
			.last { border: 0; padding-left: 5px; gap: 5px; }
		</style>
		<div style="width:1048px; padding-left:2px"><ui-text text="Pro pomoc, stiskněte F1" w="155"></ui-text></div>
		<div style="width:149px; padding-left:5px"><ui-text text="Default" w="49"></ui-text></div>
		${[131, 89, 89, 85, 87, 84].map(w => `<div style="width:${w}px"></div>`).join('')}
		<div class="last"><svg width="31" height="16" shape-rendering="crispEdges">${bars}</svg><ui-text text="99/2 kb" w="49"></ui-text></div>`;
	}
}
customElements.define('status-bar', StatusBar);

class TradeApp extends BaseElement {
	render () {
		return `
		<style>
			:host { display: flex; flex-direction: column; width: 1920px; height: 1030px; background: #f0f0f0; }
			.work { display: flex; height: 361px; border-top: 1px solid #a0a0a0; box-sizing: border-box; }
			.left { width: 216px; flex: none; }
			.right { flex: 1; border-left: 1px solid #a0a0a0; min-width: 0; }
			.nav { display: block; margin-left: auto; margin-top: 3px; }
		</style>
		<title-bar></title-bar>
		<menu-bar></menu-bar>
		<tool-bars></tool-bars>
		<div class="work">
			<div class="left">
				<dock-panel h="187" inner="160" body="133" top="1" name="Trh: 22:26:05" w="87" from="#bfcddb" to="#d7e4f2">
					<market-watch></market-watch>
					<tab-strip slot="tabs" lead="2" active="0" tabs="Symboly|83|57;Graf ticků|88|63"></tab-strip>
				</dock-panel>
				<dock-panel h="173" inner="146" body="119" top="53" name="Navigátor" w="59" from="#99b4d1" to="#b9d1ea">
					<nav-tree></nav-tree>
					<tab-strip slot="tabs" lead="2" active="0" tabs="Obecné|77|51;Oblíbené|86|60"></tab-strip>
				</dock-panel>
			</div>
			<div class="right">
				<price-chart></price-chart>
				<tab-strip lead="4" active="5" tabs="EURCAD,Weekly|138|107;EURUSD,M5|108|79;USDCHF,H4|104|78;GBPUSD,H4|104|78;USDJPY,H1|100|71;EURGBP,Monthly|140|111;GBPNZD,Monthly|144|115;GBPAUD,Monthly|144|114;AUDCAD,Monthly|144|118;AUDCHF,Monthly|144|115">
					<svg class="nav" width="50" height="14"><path d="M14 2v9l-5-4.500zM34 2v9l5-4.500z" fill="#999"/></svg>
				</tab-strip>
			</div>
		</div>
		<terminal-panel></terminal-panel>
		<tester-panel></tester-panel>
		<status-bar></status-bar>`;
	}
}
customElements.define('trade-app', TradeApp);
</script>
</body>
</html>
